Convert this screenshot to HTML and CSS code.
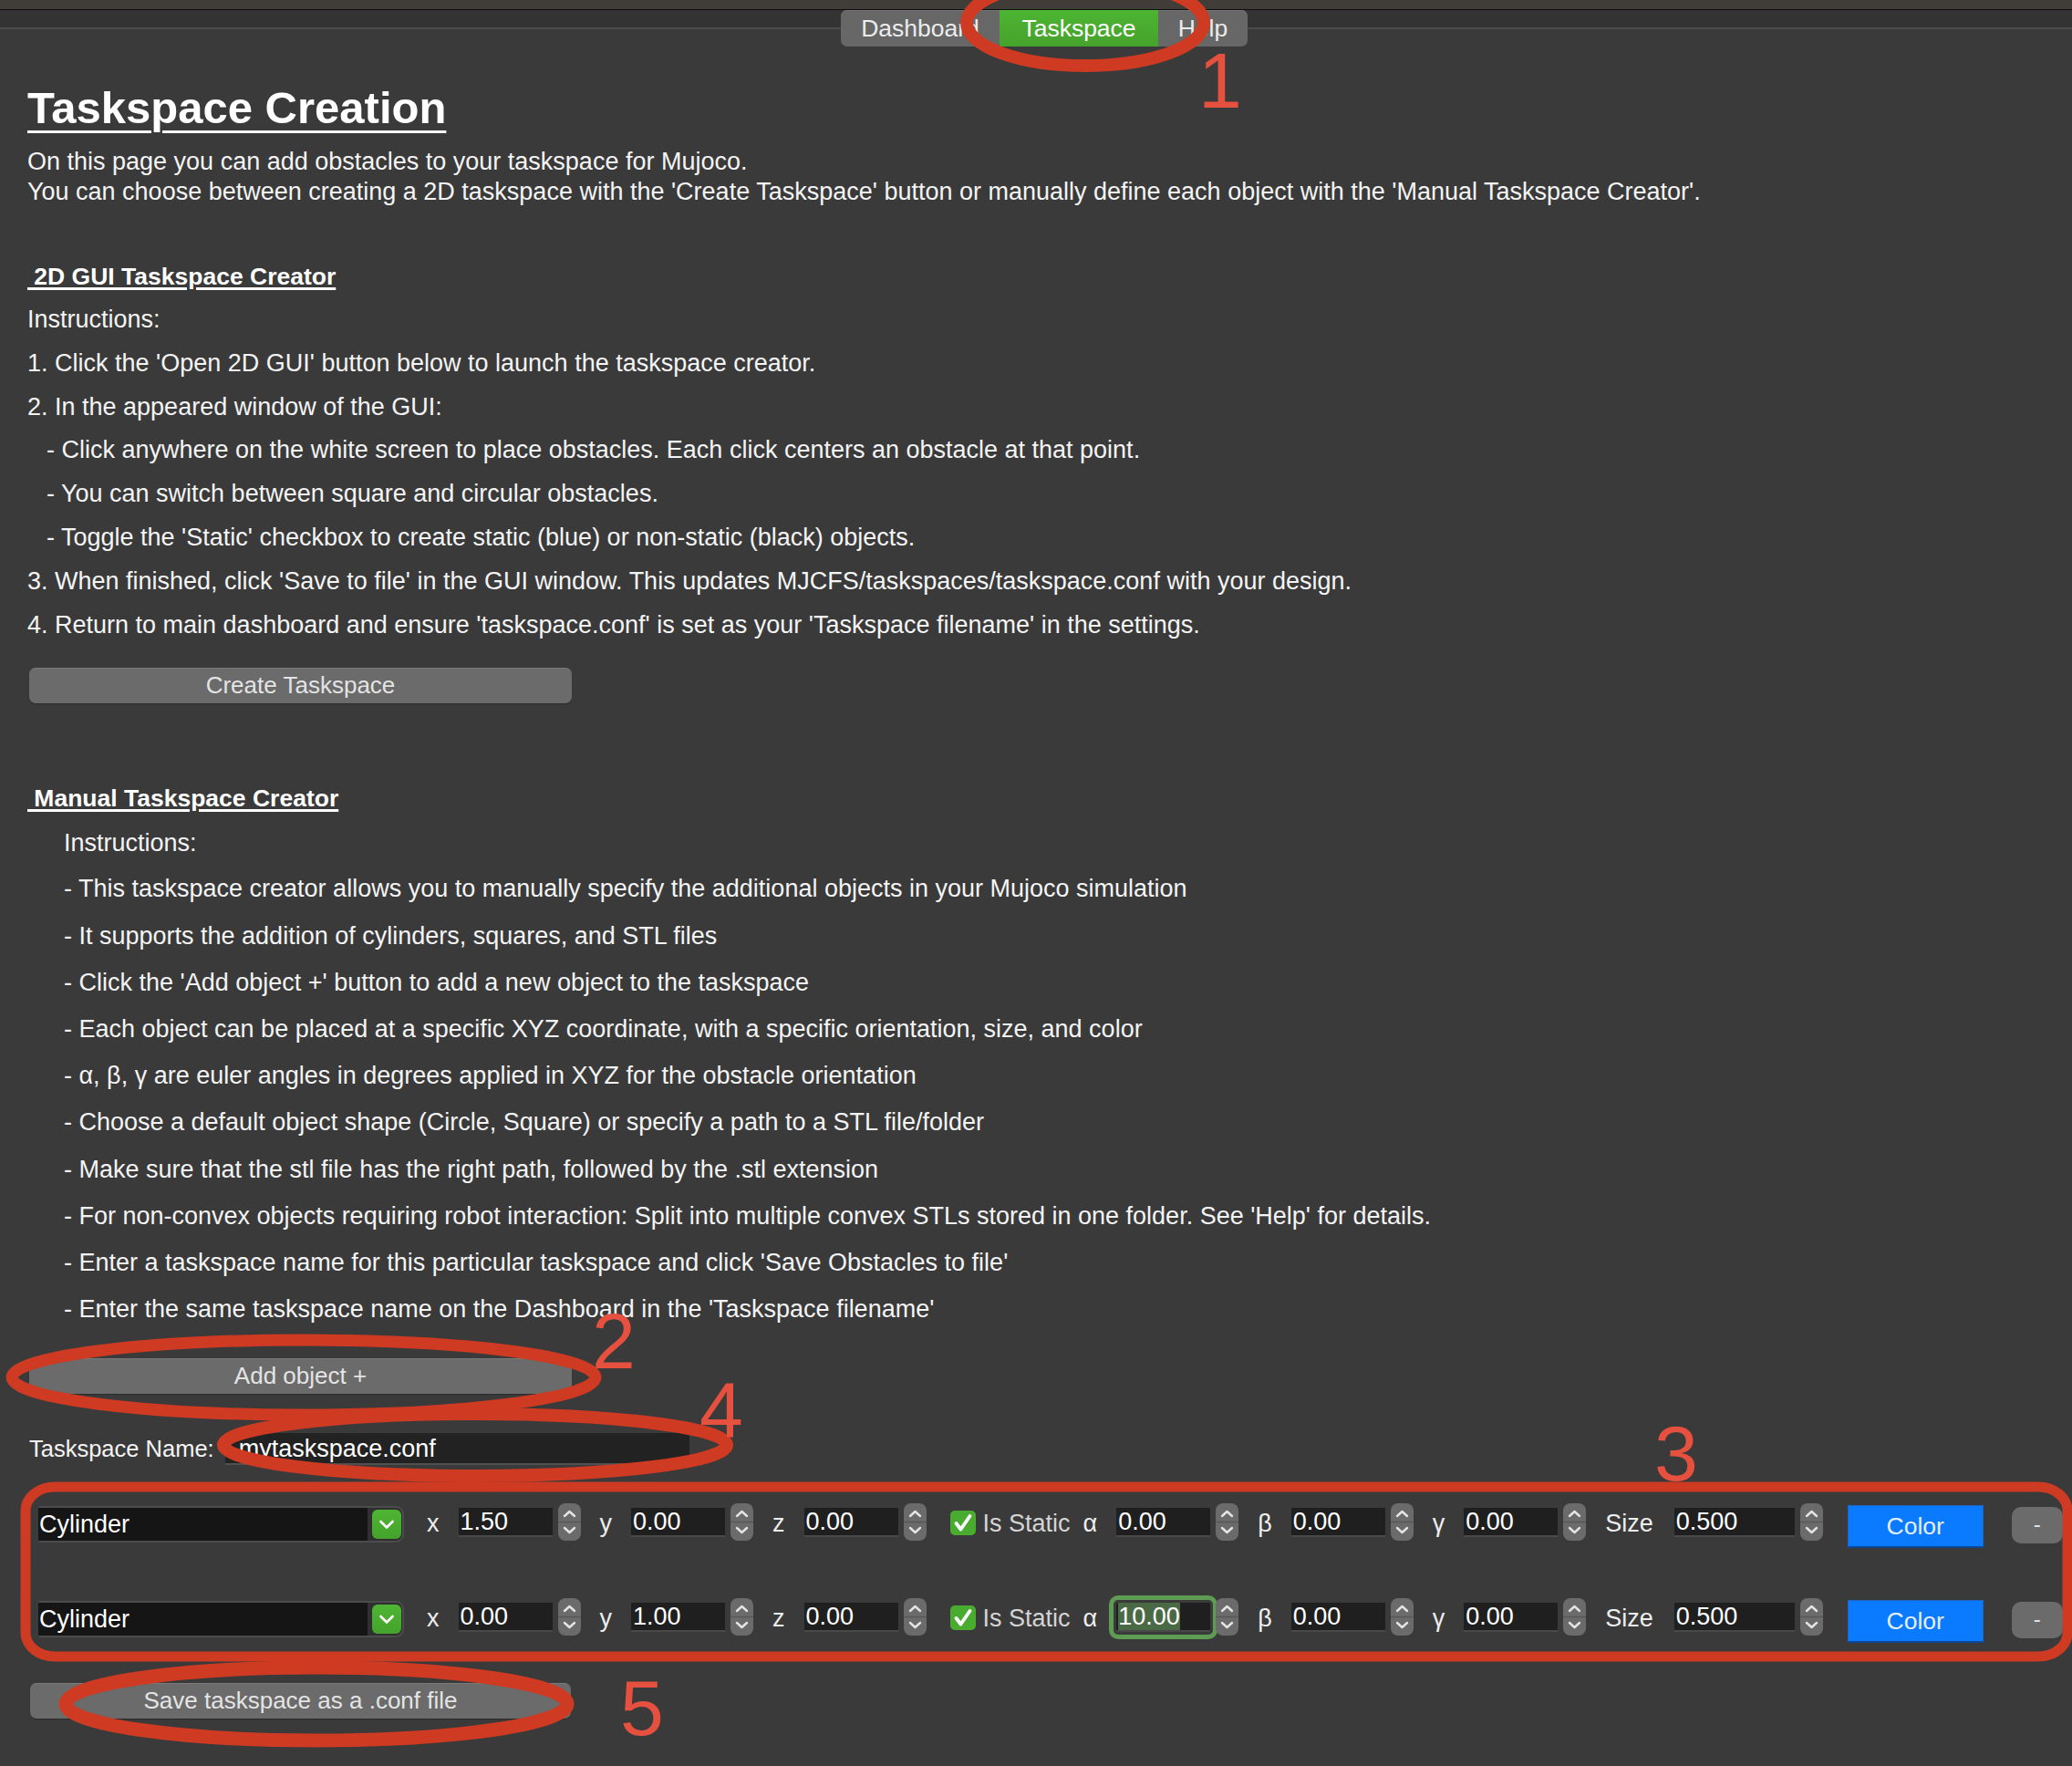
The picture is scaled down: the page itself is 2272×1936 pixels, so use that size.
FILE: index.html
```html
<!DOCTYPE html>
<html>
<head>
<meta charset="utf-8">
<title>Taskspace Creation</title>
<link rel="stylesheet" href="styles.css">
</head>
<body>
<div class="page">
  <div class="topstrip"></div>
  <div class="tabrow">
    <div class="tabs">
      <div class="tab">Dashboard</div>
      <div class="tab active">Taskspace</div>
      <div class="tab help">Help</div>
    </div>
  </div>

  <main class="content">
    <h1 class="title">Taskspace Creation</h1>
    <p class="intro">On this page you can add obstacles to your taskspace for Mujoco.<br>You can choose between creating a 2D taskspace with the 'Create Taskspace' button or manually define each object with the 'Manual Taskspace Creator'.</p>

    <h2 class="sec sec-gui">&nbsp;2D GUI Taskspace Creator</h2>
    <div class="gui-lines">
      <div class="line">Instructions:</div>
      <div class="line">1. Click the 'Open 2D GUI' button below to launch the taskspace creator.</div>
      <div class="line">2. In the appeared window of the GUI:</div>
      <div class="line sub">- Click anywhere on the white screen to place obstacles. Each click centers an obstacle at that point.</div>
      <div class="line sub">- You can switch between square and circular obstacles.</div>
      <div class="line sub">- Toggle the 'Static' checkbox to create static (blue) or non-static (black) objects.</div>
      <div class="line">3. When finished, click 'Save to file' in the GUI window. This updates MJCFS/taskspaces/taskspace.conf with your design.</div>
      <div class="line">4. Return to main dashboard and ensure 'taskspace.conf' is set as your 'Taskspace filename' in the settings.</div>
    </div>
    <div class="btn btn-create">Create Taskspace</div>

    <h2 class="sec sec-manual">&nbsp;Manual Taskspace Creator</h2>
    <div class="manual-lines">
      <div class="mline head">Instructions:</div>
      <div class="mline">- This taskspace creator allows you to manually specify the additional objects in your Mujoco simulation</div>
      <div class="mline">- It supports the addition of cylinders, squares, and STL files</div>
      <div class="mline">- Click the 'Add object +' button to add a new object to the taskspace</div>
      <div class="mline">- Each object can be placed at a specific XYZ coordinate, with a specific orientation, size, and color</div>
      <div class="mline">- α, β, γ are euler angles in degrees applied in XYZ for the obstacle orientation</div>
      <div class="mline">- Choose a default object shape (Circle, Square) or specify a path to a STL file/folder</div>
      <div class="mline">- Make sure that the stl file has the right path, followed by the .stl extension</div>
      <div class="mline">- For non-convex objects requiring robot interaction: Split into multiple convex STLs stored in one folder. See 'Help' for details.</div>
      <div class="mline">- Enter a taskspace name for this particular taskspace and click 'Save Obstacles to file'</div>
      <div class="mline">- Enter the same taskspace name on the Dashboard in the 'Taskspace filename'</div>
    </div>
    <div class="btn btn-add">Add object +</div>

    <div class="name-row">
      <span class="name-label">Taskspace Name:</span>
      <div class="name-input">mytaskspace.conf</div>
    </div>

    <div class="objects">
      <div class="obj-row">
        <div class="select"><div class="sel-field">Cylinder</div><div class="sel-arrow"><svg width="32" height="32" viewBox="0 0 32 32"><path d="M9.5 13 L16 19.5 L22.5 13" fill="none" stroke="#fff" stroke-width="2.6" stroke-linecap="round" stroke-linejoin="round"/></svg></div></div>
        <span class="lbl lbl-first">x</span><div class="num">1.50</div><svg class="spin" width="25" height="41" viewBox="0 0 25 41"><rect x="0" y="0" width="25" height="41" rx="8" fill="#6b6b6b"/><line x1="0" y1="20.5" x2="25" y2="20.5" stroke="#585858" stroke-width="1.5"/><path d="M7 14 L12.5 9 L18 14" fill="none" stroke="#e4e4e4" stroke-width="2.4" stroke-linecap="round" stroke-linejoin="round"/><path d="M7 27 L12.5 32 L18 27" fill="none" stroke="#e4e4e4" stroke-width="2.4" stroke-linecap="round" stroke-linejoin="round"/></svg>
        <span class="lbl">y</span><div class="num">0.00</div><svg class="spin" width="25" height="41" viewBox="0 0 25 41"><rect x="0" y="0" width="25" height="41" rx="8" fill="#6b6b6b"/><line x1="0" y1="20.5" x2="25" y2="20.5" stroke="#585858" stroke-width="1.5"/><path d="M7 14 L12.5 9 L18 14" fill="none" stroke="#e4e4e4" stroke-width="2.4" stroke-linecap="round" stroke-linejoin="round"/><path d="M7 27 L12.5 32 L18 27" fill="none" stroke="#e4e4e4" stroke-width="2.4" stroke-linecap="round" stroke-linejoin="round"/></svg>
        <span class="lbl">z</span><div class="num">0.00</div><svg class="spin" width="25" height="41" viewBox="0 0 25 41"><rect x="0" y="0" width="25" height="41" rx="8" fill="#6b6b6b"/><line x1="0" y1="20.5" x2="25" y2="20.5" stroke="#585858" stroke-width="1.5"/><path d="M7 14 L12.5 9 L18 14" fill="none" stroke="#e4e4e4" stroke-width="2.4" stroke-linecap="round" stroke-linejoin="round"/><path d="M7 27 L12.5 32 L18 27" fill="none" stroke="#e4e4e4" stroke-width="2.4" stroke-linecap="round" stroke-linejoin="round"/></svg>
        <svg class="check" width="28" height="27" viewBox="0 0 28 27"><rect x="0" y="0" width="28" height="27" rx="5" fill="#4aab31"/><path d="M6.5 14 L11.5 20.5 L21.5 6" fill="none" stroke="#fff" stroke-width="3.8" stroke-linecap="round" stroke-linejoin="round"/></svg>
        <span class="static">Is Static</span>
        <span class="lbl lbl-greek">α</span><div class="num">0.00</div><svg class="spin" width="25" height="41" viewBox="0 0 25 41"><rect x="0" y="0" width="25" height="41" rx="8" fill="#6b6b6b"/><line x1="0" y1="20.5" x2="25" y2="20.5" stroke="#585858" stroke-width="1.5"/><path d="M7 14 L12.5 9 L18 14" fill="none" stroke="#e4e4e4" stroke-width="2.4" stroke-linecap="round" stroke-linejoin="round"/><path d="M7 27 L12.5 32 L18 27" fill="none" stroke="#e4e4e4" stroke-width="2.4" stroke-linecap="round" stroke-linejoin="round"/></svg>
        <span class="lbl">β</span><div class="num">0.00</div><svg class="spin" width="25" height="41" viewBox="0 0 25 41"><rect x="0" y="0" width="25" height="41" rx="8" fill="#6b6b6b"/><line x1="0" y1="20.5" x2="25" y2="20.5" stroke="#585858" stroke-width="1.5"/><path d="M7 14 L12.5 9 L18 14" fill="none" stroke="#e4e4e4" stroke-width="2.4" stroke-linecap="round" stroke-linejoin="round"/><path d="M7 27 L12.5 32 L18 27" fill="none" stroke="#e4e4e4" stroke-width="2.4" stroke-linecap="round" stroke-linejoin="round"/></svg>
        <span class="lbl">γ</span><div class="num">0.00</div><svg class="spin" width="25" height="41" viewBox="0 0 25 41"><rect x="0" y="0" width="25" height="41" rx="8" fill="#6b6b6b"/><line x1="0" y1="20.5" x2="25" y2="20.5" stroke="#585858" stroke-width="1.5"/><path d="M7 14 L12.5 9 L18 14" fill="none" stroke="#e4e4e4" stroke-width="2.4" stroke-linecap="round" stroke-linejoin="round"/><path d="M7 27 L12.5 32 L18 27" fill="none" stroke="#e4e4e4" stroke-width="2.4" stroke-linecap="round" stroke-linejoin="round"/></svg>
        <span class="lbl lbl-size">Size</span><div class="num num-size">0.500</div><svg class="spin" width="25" height="41" viewBox="0 0 25 41"><rect x="0" y="0" width="25" height="41" rx="8" fill="#6b6b6b"/><line x1="0" y1="20.5" x2="25" y2="20.5" stroke="#585858" stroke-width="1.5"/><path d="M7 14 L12.5 9 L18 14" fill="none" stroke="#e4e4e4" stroke-width="2.4" stroke-linecap="round" stroke-linejoin="round"/><path d="M7 27 L12.5 32 L18 27" fill="none" stroke="#e4e4e4" stroke-width="2.4" stroke-linecap="round" stroke-linejoin="round"/></svg>
        <div class="color-btn">Color</div>
        <div class="minus-btn">-</div>
      </div>

      <div class="obj-row">
        <div class="select"><div class="sel-field">Cylinder</div><div class="sel-arrow"><svg width="32" height="32" viewBox="0 0 32 32"><path d="M9.5 13 L16 19.5 L22.5 13" fill="none" stroke="#fff" stroke-width="2.6" stroke-linecap="round" stroke-linejoin="round"/></svg></div></div>
        <span class="lbl lbl-first">x</span><div class="num">0.00</div><svg class="spin" width="25" height="41" viewBox="0 0 25 41"><rect x="0" y="0" width="25" height="41" rx="8" fill="#6b6b6b"/><line x1="0" y1="20.5" x2="25" y2="20.5" stroke="#585858" stroke-width="1.5"/><path d="M7 14 L12.5 9 L18 14" fill="none" stroke="#e4e4e4" stroke-width="2.4" stroke-linecap="round" stroke-linejoin="round"/><path d="M7 27 L12.5 32 L18 27" fill="none" stroke="#e4e4e4" stroke-width="2.4" stroke-linecap="round" stroke-linejoin="round"/></svg>
        <span class="lbl">y</span><div class="num">1.00</div><svg class="spin" width="25" height="41" viewBox="0 0 25 41"><rect x="0" y="0" width="25" height="41" rx="8" fill="#6b6b6b"/><line x1="0" y1="20.5" x2="25" y2="20.5" stroke="#585858" stroke-width="1.5"/><path d="M7 14 L12.5 9 L18 14" fill="none" stroke="#e4e4e4" stroke-width="2.4" stroke-linecap="round" stroke-linejoin="round"/><path d="M7 27 L12.5 32 L18 27" fill="none" stroke="#e4e4e4" stroke-width="2.4" stroke-linecap="round" stroke-linejoin="round"/></svg>
        <span class="lbl">z</span><div class="num">0.00</div><svg class="spin" width="25" height="41" viewBox="0 0 25 41"><rect x="0" y="0" width="25" height="41" rx="8" fill="#6b6b6b"/><line x1="0" y1="20.5" x2="25" y2="20.5" stroke="#585858" stroke-width="1.5"/><path d="M7 14 L12.5 9 L18 14" fill="none" stroke="#e4e4e4" stroke-width="2.4" stroke-linecap="round" stroke-linejoin="round"/><path d="M7 27 L12.5 32 L18 27" fill="none" stroke="#e4e4e4" stroke-width="2.4" stroke-linecap="round" stroke-linejoin="round"/></svg>
        <svg class="check" width="28" height="27" viewBox="0 0 28 27"><rect x="0" y="0" width="28" height="27" rx="5" fill="#4aab31"/><path d="M6.5 14 L11.5 20.5 L21.5 6" fill="none" stroke="#fff" stroke-width="3.8" stroke-linecap="round" stroke-linejoin="round"/></svg>
        <span class="static">Is Static</span>
        <span class="lbl lbl-greek">α</span><div class="num focused"><span class="sel-text">10.00</span></div><svg class="spin" width="25" height="41" viewBox="0 0 25 41"><rect x="0" y="0" width="25" height="41" rx="8" fill="#6b6b6b"/><line x1="0" y1="20.5" x2="25" y2="20.5" stroke="#585858" stroke-width="1.5"/><path d="M7 14 L12.5 9 L18 14" fill="none" stroke="#e4e4e4" stroke-width="2.4" stroke-linecap="round" stroke-linejoin="round"/><path d="M7 27 L12.5 32 L18 27" fill="none" stroke="#e4e4e4" stroke-width="2.4" stroke-linecap="round" stroke-linejoin="round"/></svg>
        <span class="lbl">β</span><div class="num">0.00</div><svg class="spin" width="25" height="41" viewBox="0 0 25 41"><rect x="0" y="0" width="25" height="41" rx="8" fill="#6b6b6b"/><line x1="0" y1="20.5" x2="25" y2="20.5" stroke="#585858" stroke-width="1.5"/><path d="M7 14 L12.5 9 L18 14" fill="none" stroke="#e4e4e4" stroke-width="2.4" stroke-linecap="round" stroke-linejoin="round"/><path d="M7 27 L12.5 32 L18 27" fill="none" stroke="#e4e4e4" stroke-width="2.4" stroke-linecap="round" stroke-linejoin="round"/></svg>
        <span class="lbl">γ</span><div class="num">0.00</div><svg class="spin" width="25" height="41" viewBox="0 0 25 41"><rect x="0" y="0" width="25" height="41" rx="8" fill="#6b6b6b"/><line x1="0" y1="20.5" x2="25" y2="20.5" stroke="#585858" stroke-width="1.5"/><path d="M7 14 L12.5 9 L18 14" fill="none" stroke="#e4e4e4" stroke-width="2.4" stroke-linecap="round" stroke-linejoin="round"/><path d="M7 27 L12.5 32 L18 27" fill="none" stroke="#e4e4e4" stroke-width="2.4" stroke-linecap="round" stroke-linejoin="round"/></svg>
        <span class="lbl lbl-size">Size</span><div class="num num-size">0.500</div><svg class="spin" width="25" height="41" viewBox="0 0 25 41"><rect x="0" y="0" width="25" height="41" rx="8" fill="#6b6b6b"/><line x1="0" y1="20.5" x2="25" y2="20.5" stroke="#585858" stroke-width="1.5"/><path d="M7 14 L12.5 9 L18 14" fill="none" stroke="#e4e4e4" stroke-width="2.4" stroke-linecap="round" stroke-linejoin="round"/><path d="M7 27 L12.5 32 L18 27" fill="none" stroke="#e4e4e4" stroke-width="2.4" stroke-linecap="round" stroke-linejoin="round"/></svg>
        <div class="color-btn">Color</div>
        <div class="minus-btn">-</div>
      </div>
    </div>

    <div class="btn btn-save">Save taskspace as a .conf file</div>
  </main>

  <svg class="annot" width="2272" height="1936" viewBox="0 0 2272 1936">
    <g fill="none" stroke="#cf3a22" stroke-width="14">
      <ellipse cx="1190" cy="25" rx="130" ry="47"/>
      <ellipse cx="333" cy="1510" rx="320" ry="41" stroke-width="13"/>
      <ellipse cx="521" cy="1584" rx="276" ry="34"/>
      <rect x="28" y="1630" width="2239" height="186" rx="32" ry="26" stroke-width="11"/>
      <ellipse cx="347" cy="1868" rx="275" ry="40" stroke-width="15"/>
    </g>
    <g class="digits" fill="#e5503f">
      <text x="1314" y="118">1</text>
      <text x="649" y="1500">2</text>
      <text x="1814" y="1623">3</text>
      <text x="767" y="1575">4</text>
      <text x="680" y="1902">5</text>
    </g>
  </svg>
</div>
</body>
</html>
```

FILE: styles.css
```css
html, body {
  margin: 0;
  padding: 0;
}

body {
  background: #3a3a3a;
  color: #f4f4f4;
  font-family: "Liberation Sans", Arial, Helvetica, sans-serif;
  width: 2272px;
  height: 1936px;
  overflow: hidden;
}

.page {
  position: relative;
  height: 1936px;
}

/* ---------- window top / tab bar ---------- */
.topstrip {
  height: 10px;
  background: #403c37;
  border-bottom: 1px solid #0f0f0f;
}

.tabrow {
  height: 40px;
  display: flex;
  justify-content: center;
  padding-left: 18px;
  background: linear-gradient(#333333 0 19px, #4b4b4b 19px 21px, #3a3a3a 21px);
}

.tabs {
  display: flex;
  height: 40px;
  background: #676767;
  border-radius: 7px;
  overflow: hidden;
  box-shadow: inset 0 1px 0 #747474;
}

.tab {
  width: 174px;
  text-align: center;
  font-size: 26.5px;
  line-height: 40px;
  color: #ececec;
}

.tab.help {
  width: 98px;
}

.tab.active {
  background: linear-gradient(#4db532, #45a22c);
  color: #ffffff;
}

/* ---------- content ---------- */
.content {
  padding-left: 30px;
}

.title {
  margin: 40px 0 0;
  font-size: 49px;
  line-height: 55px;
  font-weight: bold;
  color: #ffffff;
  display: inline-block;
  text-decoration: underline;
  text-decoration-thickness: 3px;
  text-underline-offset: 8px;
}

.intro {
  margin: 15px 0 0;
  font-size: 27px;
  line-height: 33px;
}

.sec {
  margin: 0;
  font-size: 26.5px;
  line-height: 48px;
  font-weight: bold;
  color: #ffffff;
  text-decoration: underline;
  text-decoration-thickness: 2.5px;
  text-underline-offset: 3px;
}

.sec-gui {
  margin-top: 52px;
}

.sec-manual {
  margin-top: 80px;
}

.line {
  font-size: 27px;
  line-height: 47.8px;
  white-space: nowrap;
}

.line.sub {
  padding-left: 21px;
}

.manual-lines {
  padding-left: 40px;
}

.mline {
  font-size: 27px;
  line-height: 51.2px;
  white-space: nowrap;
}

.mline.head {
  line-height: 50px;
}

/* ---------- buttons ---------- */
.btn {
  width: 595px;
  height: 39px;
  margin-left: 2px;
  box-sizing: border-box;
  background: #6b6b6b;
  border-radius: 7px;
  border-top: 1px solid #7b7b7b;
  box-shadow: 0 1px 1px #2c2c2c;
  color: #e4e4e4;
  font-size: 26px;
  line-height: 37px;
  text-align: center;
}

.btn-create {
  margin-top: 23px;
}

.btn-add {
  margin-top: 28px;
}

.btn-save {
  margin-top: 44px;
  margin-left: 3px;
  width: 593px;
}

/* ---------- name row ---------- */
.name-row {
  margin-top: 43px;
  height: 35px;
  display: flex;
  align-items: center;
}

.name-label {
  font-size: 25.5px;
  line-height: 35px;
  margin-left: 2px;
}

.name-input {
  margin-left: 12px;
  width: 509px;
  height: 35px;
  box-sizing: border-box;
  background: #222222;
  border-bottom: 2px solid #505050;
  padding-left: 15px;
  font-size: 27px;
  line-height: 34px;
  color: #ffffff;
}

/* ---------- object rows ---------- */
.objects {
  margin-top: 42px;
  margin-left: 12px;
}

.obj-row {
  display: flex;
  align-items: flex-start;
  height: 49px;
  margin-bottom: 55px;
}

.obj-row:last-child {
  margin-bottom: 0;
}

.select {
  margin-top: 3px;
  width: 401px;
  height: 40px;
  box-sizing: border-box;
  display: flex;
  align-items: center;
  background: #2f2f2f;
  border: 2px solid #4c4c4c;
  border-left: none;
  border-radius: 2px 9px 9px 2px;
  padding-right: 1px;
}

.sel-field {
  width: 361px;
  height: 36px;
  background: #151515;
  color: #ffffff;
  font-size: 27px;
  line-height: 36px;
  padding-left: 1px;
  box-sizing: border-box;
}

.sel-arrow {
  margin-left: 5px;
  width: 32px;
  height: 32px;
  border-radius: 6px;
  background: linear-gradient(#4fb534, #44a22c);
}

.sel-arrow svg {
  display: block;
}

.lbl {
  margin: 0 21px 0 21px;
  font-size: 27px;
  line-height: 41px;
  margin-top: 2px;
  color: #eeeeee;
}

.lbl-first {
  margin-left: 25px;
}

.lbl-greek {
  margin-left: 14px;
}

.lbl-size {
  margin-right: 23px;
}

.num {
  margin-top: 5px;
  width: 103px;
  height: 32px;
  box-sizing: border-box;
  background: #1f1f1f;
  border-bottom: 2px solid #4a4a4a;
  color: #ffffff;
  font-size: 27px;
  line-height: 31px;
  padding-left: 2px;
}

.num-size {
  width: 132px;
}

.num.focused {
  outline: 5px solid #5e9b53;
  outline-offset: 3px;
  border-radius: 2px;
}

.sel-text {
  display: inline-block;
  background: #4a6a46;
  height: 30px;
}

.spin {
  display: block;
  margin-left: 6px;
  flex: none;
}

.check {
  display: block;
  margin-top: 8px;
  margin-left: 26px;
  flex: none;
}

.static {
  margin-left: 8px;
  margin-top: 2px;
  font-size: 27px;
  line-height: 41px;
  color: #d4d4d4;
}

.color-btn {
  margin-top: 2px;
  margin-left: 27px;
  width: 149px;
  height: 47px;
  box-sizing: border-box;
  background: #0a7bff;
  border: 1px solid #1f63c4;
  border-bottom: 2px solid #0b4996;
  color: #e6eeff;
  font-size: 26.5px;
  line-height: 44px;
  text-align: center;
}

.minus-btn {
  margin-top: 4px;
  margin-left: 31px;
  width: 56px;
  height: 40px;
  border-radius: 10px;
  background: #6b6b6b;
  color: #e2e2e2;
  font-size: 24px;
  line-height: 38px;
  text-align: center;
}

/* ---------- annotations overlay ---------- */
.annot {
  position: absolute;
  top: 0;
  left: 0;
  pointer-events: none;
}

.digits text {
  font-family: "Liberation Sans", Arial, sans-serif;
  font-size: 86px;
}
```
